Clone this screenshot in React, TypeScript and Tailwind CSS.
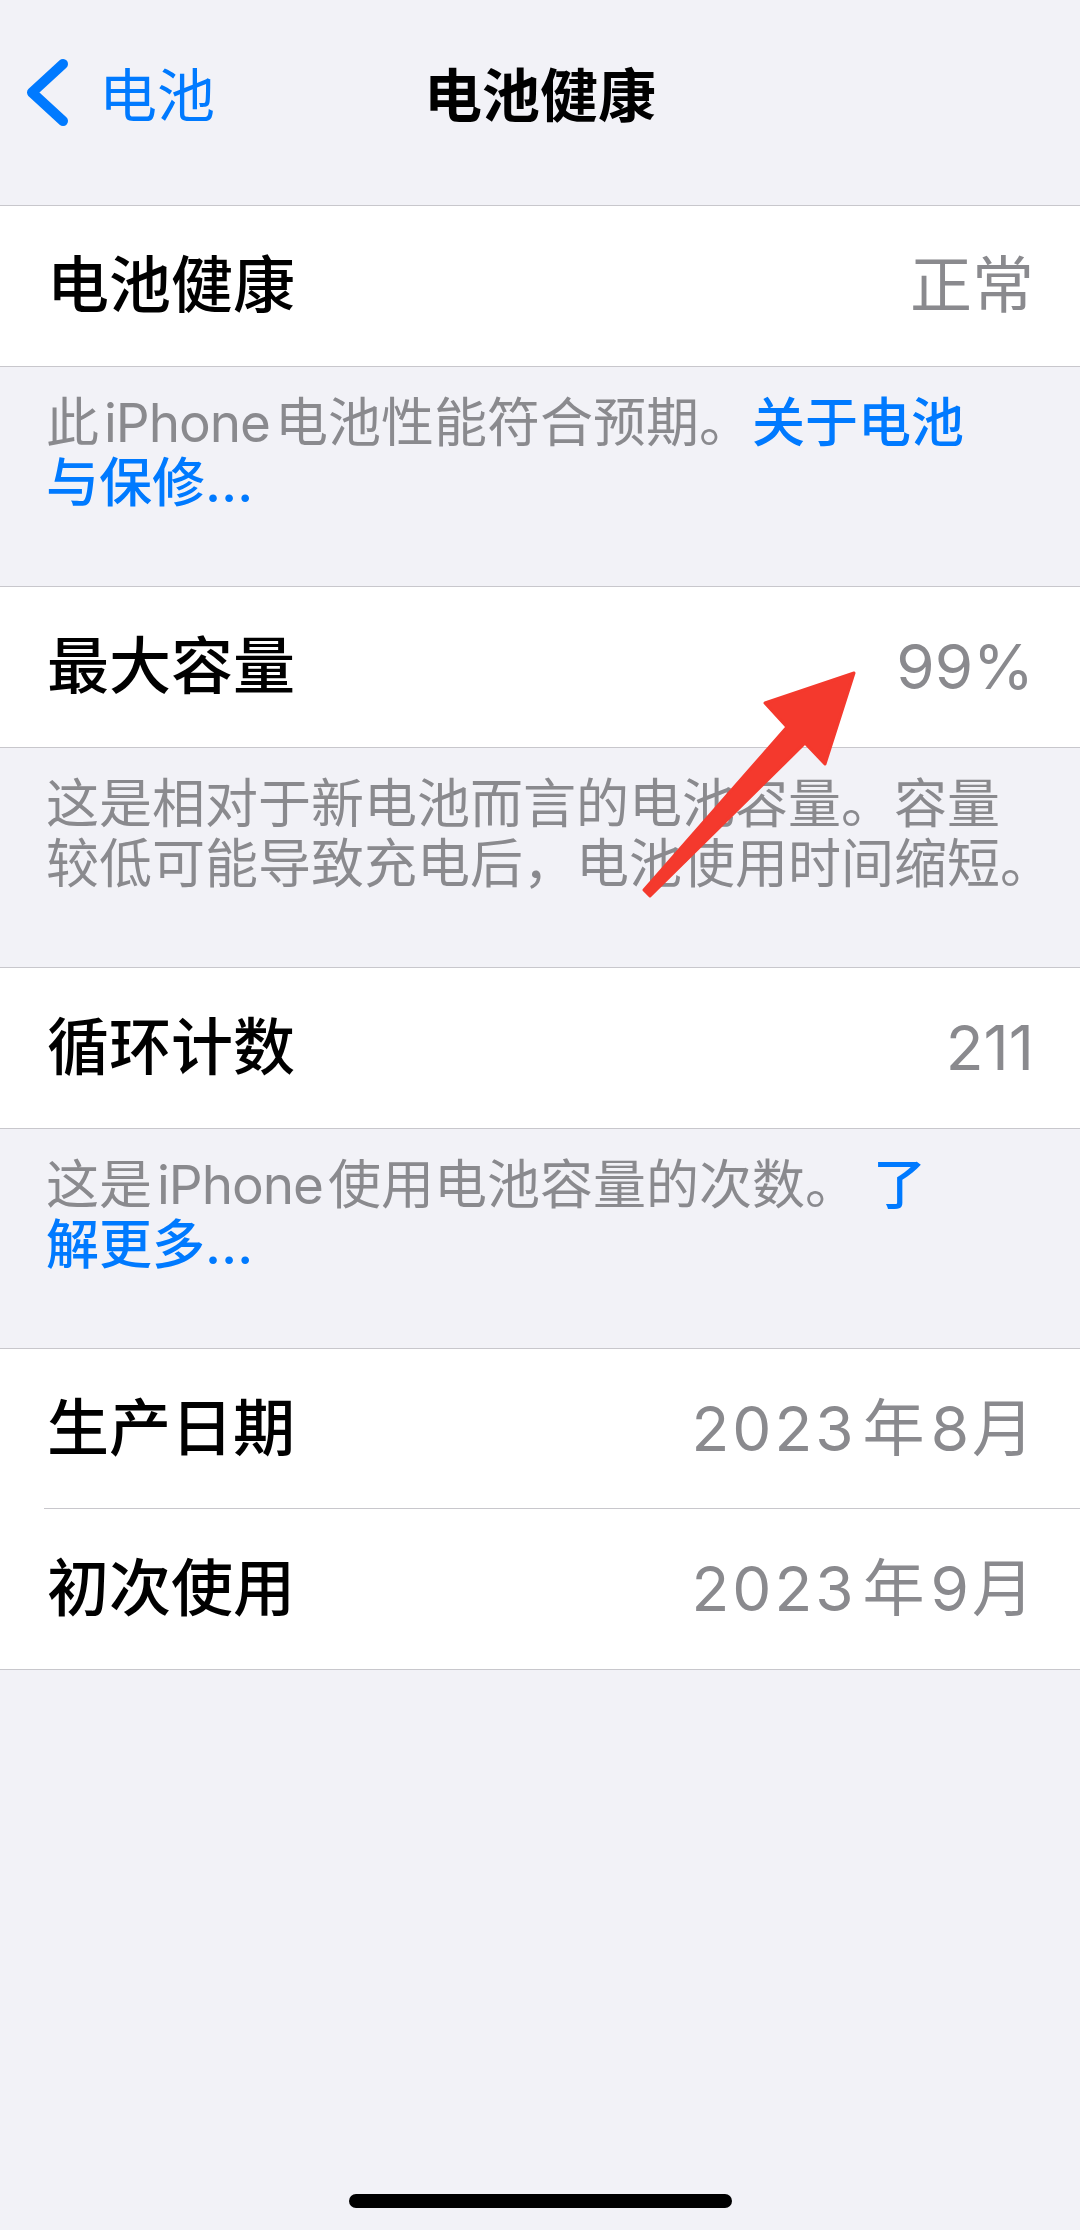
import React from 'react';

const Row = ({ label, value, sep }: { label: string; value: React.ReactNode; sep?: boolean }) => (
  <div className="relative flex h-[160px] items-center justify-between pl-[47px] pr-[46px]">
    <span className="text-[62px] font-medium leading-none text-black">{label}</span>
    <span className="text-[62px] leading-none text-[#8a8a8e]">{value}</span>
    {sep && <div className="absolute bottom-0 left-[44px] right-0 h-px bg-[#c8c7cc]" />}
  </div>
);

const Group = ({ children }: { children: React.ReactNode }) => (
  <div className="border-y border-[#c8c7cc] bg-white">{children}</div>
);

const Footer = ({ children }: { children: React.ReactNode }) => (
  <div className="whitespace-nowrap px-[46px] pt-[26px] pb-[73px] text-[53px] leading-[60px] text-[#8a8a8e]">{children}</div>
);

const Link = ({ children }: { children: React.ReactNode }) => (
  <span className="font-medium text-[#007aff]">{children}</span>
);

const Latin = ({ children }: { children: React.ReactNode }) => (
  <span className="mx-[5px] tracking-[-1px]">{children}</span>
);

const Month = ({ m }: { m: string }) => (
  <span>
    <span className="tracking-[3px]">2023</span>
    <span className="mx-[6px]">年</span>
    {m}
    <span className="ml-[3px]">月</span>
  </span>
);

export default function App() {
  return (
    <div className="relative flex h-[2230px] w-[1080px] flex-col overflow-hidden bg-[#f2f2f7] font-['Inter','Noto_Sans_CJK_SC',sans-serif]">
      <header className="h-[205px]">
        <div className="relative flex h-[184px] items-center">
          <div className="flex items-center">
            <svg width="70" height="70" viewBox="0 0 70 70" className="shrink-0">
              <polyline points="63,7 32,35.5 63,64" fill="none" stroke="#007aff" strokeWidth="10" strokeLinecap="round" strokeLinejoin="round" />
            </svg>
            <span className="ml-[29px] text-[58px] leading-none text-[#007aff] font-['Noto_Sans_CJK_SC',sans-serif]">电池</span>
          </div>
          <h1 className="absolute left-1/2 -translate-x-1/2 text-[58px] font-semibold leading-none text-black font-['Noto_Sans_CJK_SC',sans-serif]">电池健康</h1>
        </div>
      </header>

      <Group>
        <Row label="电池健康" value="正常" />
      </Group>
      <Footer>
        此<Latin>iPhone</Latin>电池性能符合预期。<Link>关于电池</Link>
        <br />
        <Link>与保修…</Link>
      </Footer>

      <Group>
        <Row label="最大容量" value="99%" />
      </Group>
      <Footer>
        这是相对于新电池而言的电池容量。容量
        <br />
        较低可能导致充电后，电池使用时间缩短。
      </Footer>

      <Group>
        <Row label="循环计数" value="211" />
      </Group>
      <Footer>
        这是<Latin>iPhone</Latin>使用电池容量的次数。 <Link>了</Link>
        <br />
        <Link>解更多…</Link>
      </Footer>

      <Group>
        <Row label="生产日期" value={<Month m="8" />} sep />
        <Row label="初次使用" value={<Month m="9" />} />
      </Group>

      <div className="flex-1" />
      <div className="mx-auto mb-[22px] h-[14px] w-[383px] rounded-full bg-black" />

      <svg className="pointer-events-none absolute left-0 top-0" width="1080" height="2230" viewBox="0 0 1080 2230">
        <polygon
          points="854,673 825,764 805,743 650,896 644,890 787,727 765,703"
          fill="#f4392d"
          strokeLinejoin="round"
          stroke="#f4392d"
          strokeWidth="3"
        />
      </svg>
    </div>
  );
}
